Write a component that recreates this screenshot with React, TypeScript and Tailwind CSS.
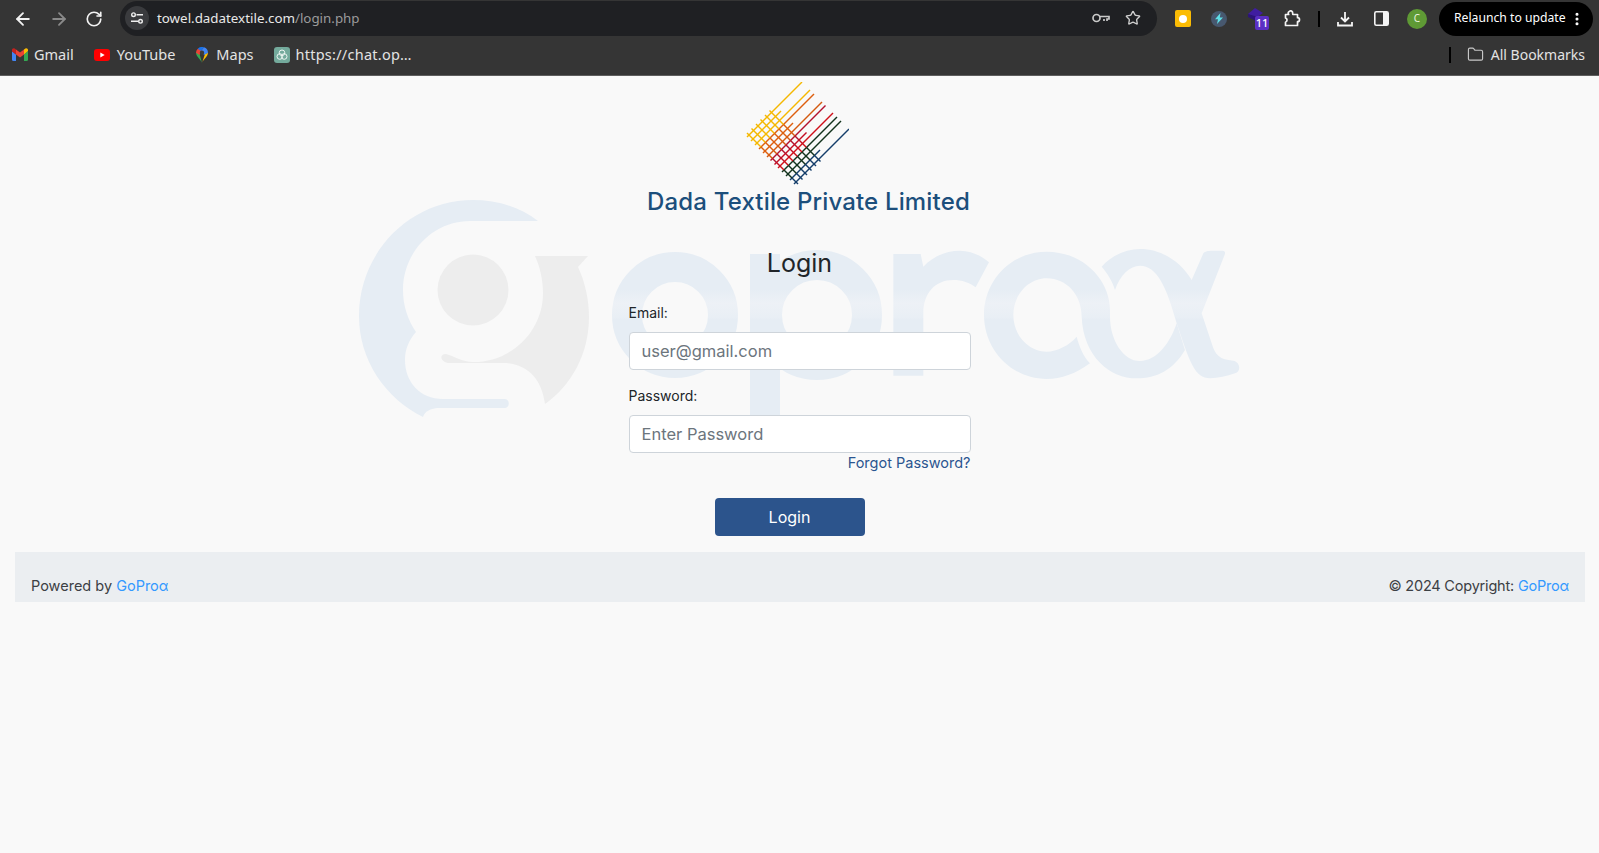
import { ArrowLeft, ArrowRight, RotateCw, Star, Folder, EllipsisVertical } from "lucide-react";

const POPPINS = "font-['Inter','Noto_Sans',sans-serif]";

function ToolbarIcon({ children, className }: { children: React.ReactNode; className?: string }) {
  return <span className={`flex items-center justify-center shrink-0 ${className ?? ""}`}>{children}</span>;
}

function GmailIcon() {
  return (
    <svg width="16" height="13" viewBox="0 0 16 13">
      <path d="M0 3v8.500A1.500 1.500 0 0 0 1.500 13H4V6.500z" fill="#4285f4" />
      <path d="M12 6.500V13h2.500a1.500 1.500 0 0 0 1.500-1.500V3z" fill="#34a853" />
      <path d="M12 1.500v5l4-3.500V2C16 .6 14.500-.2 13.400.6z" fill="#fbbc04" />
      <path d="M4 6.500v-5l4 3 4-3v5l-4 3z" fill="#ea4335" />
      <path d="M0 2v1.500l4 3v-5L2.600.6C1.500-.2 0 .6 0 2z" fill="#c5221f" />
    </svg>
  );
}

function YoutubeIcon() {
  return (
    <svg width="16" height="12" viewBox="0 0 16 12">
      <rect width="16" height="12" rx="3" fill="#ff0000" />
      <path d="M6.300 3.400v5.200L10.700 6z" fill="#fff" />
    </svg>
  );
}

function MapsIcon() {
  return (
    <svg width="12" height="16" viewBox="0 0 12 16">
      <path d="M6 16C5 12.500 0 9.500 0 5.800L3 5z" fill="#34a853" />
      <path d="M6 16c1-3.500 6-6.500 6-10.200L9 7z" fill="#fbbc04" />
      <path d="M1.800 1.700A6 6 0 0 0 0 5.800L3.500 8l2-5z" fill="#ea4335" />
      <path d="M1.800 1.700A6 6 0 0 1 8 .3L5 4z" fill="#1a73e8" />
      <path d="M8 .3A6 6 0 0 1 12 5.800L8 8 5 4z" fill="#4285f4" />
      <circle cx="6" cy="5.700" r="2.200" fill="#3b3b3b" />
    </svg>
  );
}

function ChatIcon() {
  return (
    <svg width="16" height="16" viewBox="0 0 16 16">
      <rect width="16" height="16" rx="3" fill="#74aa9c" />
      <g fill="none" stroke="#eef6f3" strokeWidth="1">
        <circle cx="8" cy="5.800" r="2.800" />
        <circle cx="5.800" cy="9.500" r="2.800" />
        <circle cx="10.200" cy="9.500" r="2.800" />
      </g>
    </svg>
  );
}

function BrowserChrome() {
  return (
    <header className="shrink-0 bg-[#353535] border-b border-[#5e5e5e] font-['Noto_Sans',sans-serif]">
      <div className="h-[37px] flex items-center relative">
        <div className="w-[120px] flex items-center pl-[13px] gap-[16px] shrink-0">
          <ArrowLeft size={20} color="#f2f2f2" strokeWidth={2.2} />
          <ArrowRight size={20} color="#8a8a8a" strokeWidth={2.2} />
          <RotateCw size={18} color="#f2f2f2" strokeWidth={2.2} />
        </div>
        <div className="w-[1037px] h-[35px] -mt-[1px] rounded-full bg-[#1f2023] flex items-center pl-[5px] pr-[16px] shrink-0">
          <span className="w-[24px] h-[24px] rounded-full bg-[#3a3b3e] flex items-center justify-center">
            <svg width="14" height="12" viewBox="0 0 14 12" fill="none" stroke="#f0f0f0" strokeWidth="1.400">
              <circle cx="3.500" cy="2.700" r="1.800" />
              <path d="M6.500 2.700H13M1 9.300h7" />
              <circle cx="10.500" cy="9.300" r="1.800" />
            </svg>
          </span>
          <span className="ml-[8px] text-[13.350px] text-[#e8e8e8]">
            towel.dadatextile.com<span className="text-[#9b9b9b]">/login.php</span>
          </span>
          <span className="ml-auto flex items-center gap-[15px]">
            <svg width="18" height="10" viewBox="0 0 18 10" fill="none" stroke="#c9c9c9" strokeWidth="1.700">
              <circle cx="4.500" cy="5" r="3.500" />
              <path d="M8 3.500h9v2.500h-2v2M12 6v2" />
            </svg>
            <Star size={16} color="#d0d0d0" strokeWidth={2} />
          </span>
        </div>
        <ToolbarIcon className="w-[16px] h-[17px] ml-[18px] rounded-[2px] bg-[#fbbc04]">
          <span className="w-[8px] h-[8px] rounded-full bg-white" />
        </ToolbarIcon>
        <ToolbarIcon className="w-[16px] h-[16px] ml-[20px] rounded-full bg-[#47586f]">
          <svg width="8" height="11" viewBox="0 0 8 11"><path d="M5.500 0L0 6.200h3L2 11l6-6.500H4.800z" fill="#5fe0e8" /></svg>
        </ToolbarIcon>
        <span className="relative w-[22px] h-[22px] ml-[20px] shrink-0">
          <svg width="17" height="14" viewBox="0 0 17 14" className="absolute left-0 top-0"><path d="M8 0l8 5-7 5-8-4z" fill="#3f1da0" /><path d="M1 6v3l8 4 2-1V9z" fill="#2c1478" /></svg>
          <span className="absolute left-[8px] top-[8px] w-[14px] h-[14px] rounded-[2px] bg-[#5b2fc4] text-white text-[11px] leading-[14px] text-center font-medium">11</span>
        </span>
        <ToolbarIcon className="ml-[15px]">
          <svg width="17" height="17" viewBox="0 0 17 17" fill="none" stroke="#f4f4f4" strokeWidth="1.700" strokeLinejoin="round">
            <path d="M1.500 4.500h3.200a2 2 0 0 1 3.800-2.500l.3 2.500h4.700v3.200a2 2 0 0 1 0 4v3.800H1.500v-3.300a2.200 2.200 0 0 0 0-4.200z" />
          </svg>
        </ToolbarIcon>
        <span className="w-[2px] h-[16px] bg-black ml-[17px] shrink-0" />
        <ToolbarIcon className="ml-[17px]">
          <svg width="16" height="16" viewBox="0 0 16 16" fill="none" stroke="#f4f4f4" strokeWidth="1.800">
            <path d="M8 1v9M4 6.500l4 4 4-4M1 11v3.500h14V11" />
          </svg>
        </ToolbarIcon>
        <ToolbarIcon className="ml-[21px]">
          <svg width="15" height="15" viewBox="0 0 15 15"><rect x=".8" y=".8" width="13.400" height="13.400" rx="1.500" fill="none" stroke="#f4f4f4" strokeWidth="1.600" /><rect x="9" y="1" width="5" height="13" fill="#f4f4f4" /></svg>
        </ToolbarIcon>
        <span className="w-[20px] h-[20px] ml-[18px] rounded-full bg-[#5f9a35] text-[#eaf4dd] text-[10px] flex items-center justify-center shrink-0">C</span>
        <div className="w-[154px] h-[34px] ml-[12px] rounded-full bg-black text-white text-[12.200px] flex items-center pl-[15px] shrink-0 whitespace-nowrap">
          Relaunch to update
          <EllipsisVertical size={16} color="#fff" strokeWidth={2.600} className="ml-[3px]" />
        </div>
      </div>
      <div className="h-[38px] pb-[3px] flex items-center text-[14.500px] text-[#e3e3e3]">
        <span className="flex items-center gap-[6px] ml-[12px]"><GmailIcon />Gmail</span>
        <span className="flex items-center gap-[7px] ml-[20px]"><YoutubeIcon />YouTube</span>
        <span className="flex items-center gap-[8px] ml-[21px]"><MapsIcon />Maps</span>
        <span className="flex items-center gap-[6px] ml-[20px] tracking-[0.25px]"><ChatIcon />https://chat.op…</span>
        <span className="w-[2px] h-[16px] bg-black ml-auto" />
        <span className="flex items-center gap-[7px] ml-[16px] mr-[14px] text-[14px]">
          <Folder size={17} color="#c9c9c9" strokeWidth={1.600} />
          All Bookmarks
        </span>
      </div>
    </header>
  );
}

// Long threads run up-right from the lower-left edge, short ones only fill the weave.
const THREADS = [
  { v: 0, color: "#f5b800", len: 55 },
  { v: 4, color: "#f5b800", len: 30 },
  { v: 8, color: "#f5b800", len: 55 },
  { v: 12, color: "#dd5f0e", len: 55 },
  { v: 16, color: "#dd5f0e", len: 30 },
  { v: 20, color: "#d45a10", len: 55 },
  { v: 23.500, color: "#b3122e", len: 55 },
  { v: 27.500, color: "#c30f24", len: 32 },
  { v: 31, color: "#d0101a", len: 55 },
  { v: 35, color: "#12331c", len: 55 },
  { v: 39, color: "#12331c", len: 55 },
  { v: 43, color: "#153e6b", len: 30 },
  { v: 47, color: "#153e6b", len: 55 },
];
const CROSSES = [2, 6.500, 11, 15.500, 20, 24.500];

function FabricLogo() {
  const ox = 2;
  const oy = 55;
  const last = THREADS.length - 1;
  return (
    <svg width="104" height="104" viewBox="0 0 104 104" className="block">
      {THREADS.map((t) => (
        <line key={t.v} x1={ox + t.v} y1={oy + t.v} x2={ox + t.v + t.len} y2={oy + t.v - t.len} stroke={t.color} strokeWidth="1.400" />
      ))}
      {CROSSES.flatMap((c) =>
        THREADS.slice(0, last).map((t, i) => {
          const next = THREADS[i + 1].v;
          const start = i === 0 ? 2 : 0;
          const end = i === last - 1 ? 2 : 0;
          return (
            <line key={`${c}-${t.v}`} x1={ox + c + t.v - start} y1={oy - c + t.v - start} x2={ox + c + next + end} y2={oy - c + next + end} stroke={t.color} strokeWidth="1.400" />
          );
        })
      )}
    </svg>
  );
}

function Watermark() {
  return (
    <svg width="900" height="260" viewBox="355 190 900 260" className="absolute left-[355px] top-[114px]" aria-hidden>
      <defs>
        <linearGradient id="band" gradientUnits="userSpaceOnUse" x1="0" y1="240" x2="0" y2="380">
          <stop offset="0" stopColor="#e6edf4" />
          <stop offset="0.35" stopColor="#e6edf4" />
          <stop offset="0.45" stopColor="#edf1f6" />
          <stop offset="0.55" stopColor="#e9eff5" />
          <stop offset="0.57" stopColor="#e6edf4" />
          <stop offset="1" stopColor="#e6edf4" />
        </linearGradient>
        <linearGradient id="bandTraced" gradientUnits="userSpaceOnUse" x1="0" y1="30" x2="0" y2="450">
          <stop offset="0" stopColor="#e6edf4" />
          <stop offset="0.35" stopColor="#e6edf4" />
          <stop offset="0.45" stopColor="#edf1f6" />
          <stop offset="0.55" stopColor="#e9eff5" />
          <stop offset="0.57" stopColor="#e6edf4" />
          <stop offset="1" stopColor="#e6edf4" />
        </linearGradient>
      </defs>
      <path d="M538 221C520 207 497 200 473 200C410 200 359 252 359 316C359 360 385 398 423 417C425 411 430 409 437 408L505 408C510 408 510 399 505 399L443 399C420 399 405 382 405 360C405 349 409 340 416 332C408 320 403 306 403 290C403 252 433 221 470 221Z" fill="#e6edf4" />
      <path d="M535 256L588 256L578 267C585 282 589 299 589 317C589 354 571 386 545 404C542 380 528 363 503 363L450 363C441 363 438 354 446 354C454 356 462 362 473 362C512 362 543 331 543 293C543 280 540 267 535 256Z" fill="#ededed" />
      <circle cx="473" cy="290" r="35.500" fill="#ededed" />
      <g fill="none" stroke="url(#band)" strokeWidth="30">
        <circle cx="675" cy="315" r="48" />
        <circle cx="817" cy="315" r="50" />
        <path d="M765 254V440" />
      </g>
      <g transform="translate(790 230) scale(0.33333)" fill="url(#bandTraced)">
        <path d="M310 72L392 72L400 110C430 78 470 62 510 62C545 62 575 78 597 97L557 172C540 158 515 150 490 150C435 150 400 190 400 250L400 437L310 437Z" />
        <path d="M900 400C855 432 815 447 770 447C665 447 582 360 582 255C582 150 665 65 770 65C880 65 960 150 960 240L960 260C960 330 1000 393 1050 393C1100 393 1140 340 1160 280L1185 360C1150 420 1100 445 1040 445C960 445 880 380 875 260C875 195 830 145 770 145C715 145 670 195 670 255C670 315 715 365 770 365C800 365 840 345 860 320C868 350 880 380 900 400Z" />
        <path d="M935 110C965 75 1010 57 1050 57C1120 57 1175 100 1205 150L1240 70C1245 62 1260 62 1270 62L1298 62C1305 62 1307 68 1304 74L1235 250L1265 340C1275 375 1290 390 1330 392C1350 395 1355 425 1335 430C1310 438 1285 445 1260 445C1215 445 1200 400 1160 280C1130 170 1100 107 1050 107C1020 107 990 135 975 180C968 155 952 130 935 110Z" />
      </g>
    </svg>
  );
}

function Field({ label, placeholder, type }: { label: string; placeholder: string; type: string }) {
  return (
    <label className="block">
      <span className="block text-[14px] leading-[21px] text-[#212529]">{label}</span>
      <input
        type={type}
        placeholder={placeholder}
        className="mt-[9px] block w-full h-[38px] rounded-[4px] border border-[#ced4da] bg-white px-[12px] pb-[1px] text-[16.500px] placeholder:text-[#6c757d] outline-none"
      />
    </label>
  );
}

export default function App() {
  return (
    <div className={`w-[1599px] h-[853px] overflow-hidden flex flex-col bg-[#f9f9f9] ${POPPINS}`}>
      <BrowserChrome />
      <main className="relative flex-1 flex flex-col">
        <Watermark />
        <div className="relative flex flex-col items-center">
          <div className="mt-[6px] -ml-[6px]"><FabricLogo /></div>
          <h1 className="ml-[18px] text-[24px] leading-[32px] font-medium text-[#1c4f7c] tracking-[0.16px]">Dada Textile Private Limited</h1>
          <h2 className="mt-[29px] text-[25px] leading-[32px] text-[#212529]">Login</h2>
          <form className="w-[342px] mt-[23px]">
            <Field label="Email:" placeholder="user@gmail.com" type="email" />
            <div className="mt-[15px]">
              <Field label="Password:" placeholder="Enter Password" type="password" />
            </div>
            <div className="text-right -mt-[3px]">
              <a className="text-[14.500px] leading-[21px] text-[#2b5590]">Forgot Password?</a>
            </div>
            <div className="flex justify-center mt-[24px] pr-[20px]">
              <button type="button" className="w-[150px] h-[38px] rounded-[4px] bg-[#2c548c] text-white text-[16px] pb-[1px]">Login</button>
            </div>
          </form>
        </div>
        <footer className="relative mt-[16px] ml-[15px] mr-[14px] h-[50px] bg-[#ebeef1] flex items-end justify-between px-[16px] pb-[6px] text-[14.500px] leading-[21px] text-[#3c4044]">
          <span>Powered by <a className="text-[#3399ff]">GoProα</a></span>
          <span className="tracking-[-0.2px]">© 2024 Copyright: <a className="text-[#3399ff]">GoProα</a></span>
        </footer>
      </main>
    </div>
  );
}
